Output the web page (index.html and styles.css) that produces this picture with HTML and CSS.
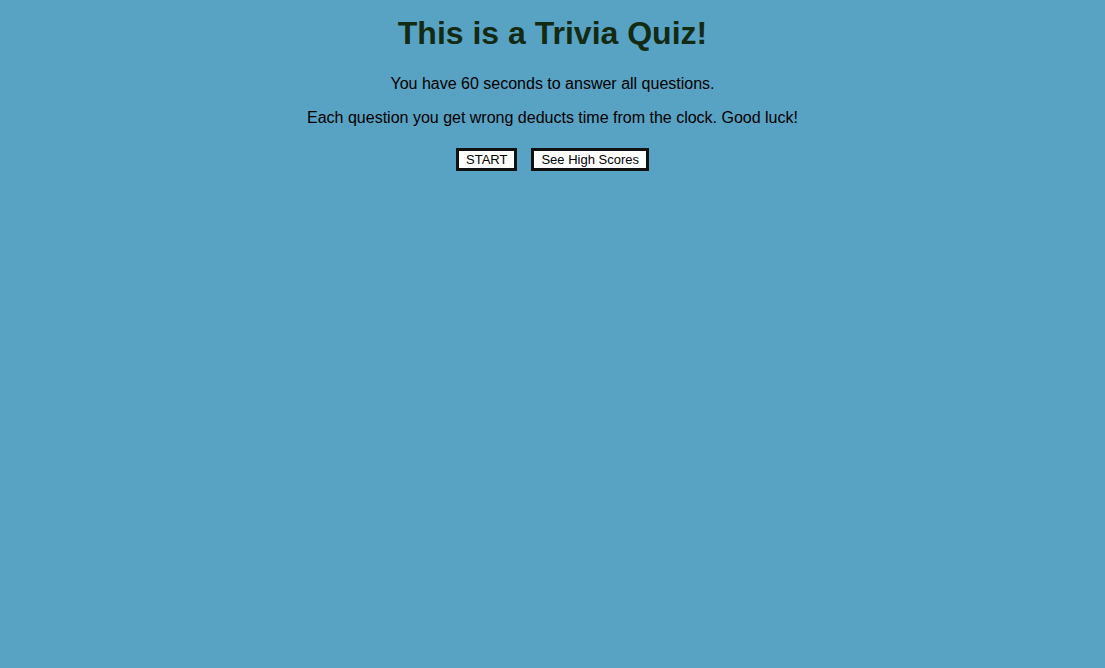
FILE: index.html
```html
<!DOCTYPE html>
<html>
<head>
<meta charset="utf-8">
<link rel="stylesheet" href="styles.css">
<title>Trivia Quiz</title>
</head>
<body>
<main class="intro">
  <h1 class="title">This is a Trivia Quiz!</h1>
  <p class="text">You have 60 seconds to answer all questions.</p>
  <p class="text">Each question you get wrong deducts time from the clock. Good luck!</p>
  <div class="actions">
    <button class="btn">START</button>
    <button class="btn">See High Scores</button>
  </div>
</main>
</body>
</html>
```

FILE: styles.css
```css
html, body {
  margin: 0;
  padding: 0;
  background: #58a2c3;
  height: 100%;
}
body {
  font-family: "Liberation Sans", Arial, sans-serif;
  color: #000;
}
.intro {
  text-align: center;
  padding-top: 15px;
}
.title {
  margin: 0 0 23px;
  font-size: 32px;
  font-weight: bold;
  color: #132a13;
}
.text {
  margin: 0 0 16px;
  font-size: 16px;
}
.actions {
  display: flex;
  justify-content: center;
  gap: 14px;
  padding-top: 5px;
}
.btn {
  font-family: "Liberation Sans", Arial, sans-serif;
  font-size: 13px;
  background: #fff;
  color: #000;
  border: 3px solid #111;
  padding: 1px 7px;
  height: 23px;
  border-radius: 0;
}
```
